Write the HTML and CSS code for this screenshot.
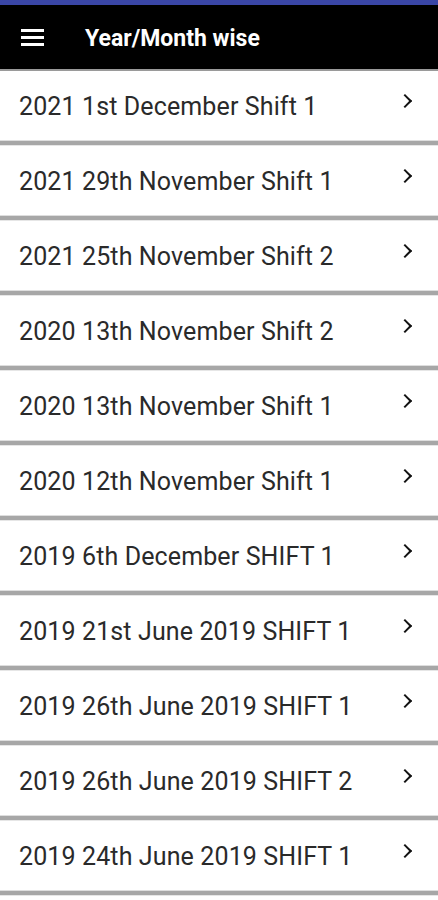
FILE: index.html
```html
<!DOCTYPE html>
<html lang="en">
<head>
    <meta charset="UTF-8">
    <meta name="viewport" content="width=device-width, initial-scale=1.0">
    <title>Year/Month wise</title>
    <link rel="stylesheet" href="styles.css">
</head>
<body>
    <div class="status-bar"></div>
    <header class="toolbar">
        <button class="menu-button" type="button" aria-label="Menu">
            <svg width="24" height="18" viewBox="0 0 24 18">
                <rect x="0" y="0" width="23" height="3" fill="#fff"/>
                <rect x="0" y="7" width="23" height="3" fill="#fff"/>
                <rect x="0" y="14" width="23" height="3" fill="#fff"/>
            </svg>
        </button>
        <h1>Year/Month wise</h1>
    </header>

    <ul class="paper-list">
        <li class="paper-item"><span>2021 1st December Shift 1</span><i class="chevron"></i></li>
        <li class="paper-item"><span>2021 29th November Shift 1</span><i class="chevron"></i></li>
        <li class="paper-item"><span>2021 25th November Shift 2</span><i class="chevron"></i></li>
        <li class="paper-item"><span>2020 13th November Shift 2</span><i class="chevron"></i></li>
        <li class="paper-item"><span>2020 13th November Shift 1</span><i class="chevron"></i></li>
        <li class="paper-item"><span>2020 12th November Shift 1</span><i class="chevron"></i></li>
        <li class="paper-item"><span>2019 6th December SHIFT 1</span><i class="chevron"></i></li>
        <li class="paper-item"><span>2019 21st June 2019 SHIFT 1</span><i class="chevron"></i></li>
        <li class="paper-item"><span>2019 26th June 2019 SHIFT 1</span><i class="chevron"></i></li>
        <li class="paper-item"><span>2019 26th June 2019 SHIFT 2</span><i class="chevron"></i></li>
        <li class="paper-item"><span>2019 24th June 2019 SHIFT 1</span><i class="chevron"></i></li>
    </ul>
</body>
</html>
```

FILE: styles.css
```css
body {
    font-family: Roboto, "Liberation Sans", sans-serif;
    background-color: #fff;
    margin: 0;
    padding: 0;
    overflow: hidden;
}

.status-bar {
    height: 5px;
    background-color: #3a46a6;
}

.toolbar {
    height: 64px;
    background-color: #000;
    border-bottom: 2px solid #9a9a9a;
    display: flex;
    align-items: center;
}

.menu-button {
    background: none;
    border: none;
    padding: 0;
    margin-left: 21px;
    margin-top: 2px;
    width: 24px;
    height: 18px;
    display: flex;
}

.toolbar h1 {
    margin: 3px 0 0 40px;
    color: #fff;
    font-size: 23px;
    font-weight: bold;
}

.paper-list {
    list-style: none;
    margin: 0;
    padding: 0;
}

.paper-item {
    box-sizing: border-box;
    height: 75px;
    display: flex;
    align-items: center;
    justify-content: space-between;
    padding: 1px 28px 6px 19px;
    font-size: 25px;
    letter-spacing: 0.12px;
    color: #2a2a2a;
    background: linear-gradient(to top, #e6e6e6 0 1px, #a7a7a7 1px 5px, #dedede 5px 6px, #fff 6px);
}

.chevron {
    width: 8px;
    height: 8px;
    border-top: 2px solid #111;
    border-right: 2px solid #111;
    transform: rotate(45deg);
    margin-bottom: 10px;
}
```
